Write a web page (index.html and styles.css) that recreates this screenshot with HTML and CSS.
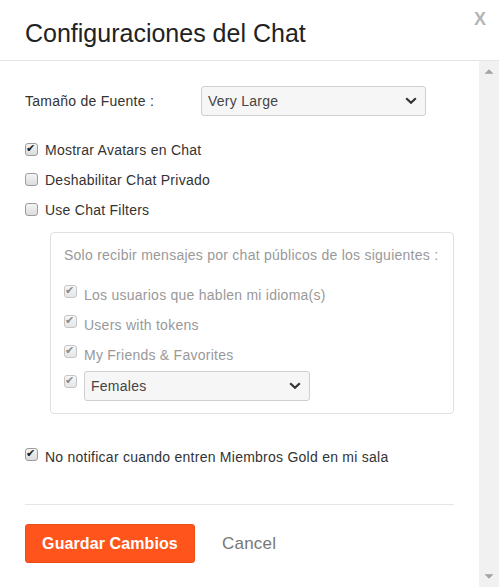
FILE: index.html
```html
<!DOCTYPE html>
<html lang="es">
<head>
<meta charset="utf-8">
<title>Configuraciones del Chat</title>
<link rel="stylesheet" href="styles.css">
</head>
<body>
<div class="modal">
  <header class="modal-header">
    <h1 class="title">Configuraciones del Chat</h1>
    <button class="close" type="button">X</button>
  </header>
  <div class="modal-body">
    <div class="content">
      <div class="font-row">
        <label class="font-label">Tamaño de Fuente :</label>
        <div class="select select-font">
          <select><option>Very Large</option></select>
          <svg class="chevron" width="12" height="8" viewBox="0 0 12 8"><polyline points="1.2,1.2 6,5.8 10.8,1.2" fill="none" stroke="#333" stroke-width="2.2"/></svg>
        </div>
      </div>
      <div class="options">
        <label class="check-row"><input type="checkbox" checked><span>Mostrar Avatars en Chat</span></label>
        <label class="check-row"><input type="checkbox"><span>Deshabilitar Chat Privado</span></label>
        <label class="check-row"><input type="checkbox"><span>Use Chat Filters</span></label>
      </div>
      <div class="filters">
        <p class="filters-note">Solo recibir mensajes por chat públicos de los siguientes :</p>
        <label class="check-row inner"><input type="checkbox" checked disabled><span>Los usuarios que hablen mi idioma(s)</span></label>
        <label class="check-row inner"><input type="checkbox" checked disabled><span>Users with tokens</span></label>
        <label class="check-row inner"><input type="checkbox" checked disabled><span>My Friends &amp; Favorites</span></label>
        <div class="check-row inner select-row">
          <input type="checkbox" checked disabled>
          <div class="select select-gender">
            <select><option>Females</option></select>
            <svg class="chevron" width="12" height="8" viewBox="0 0 12 8"><polyline points="1.2,1.2 6,5.8 10.8,1.2" fill="none" stroke="#333" stroke-width="2.2"/></svg>
          </div>
        </div>
      </div>
      <label class="check-row notify"><input type="checkbox" checked><span>No notificar cuando entren Miembros Gold en mi sala</span></label>
      <hr class="divider">
      <div class="actions">
        <button class="btn-save" type="button">Guardar Cambios</button>
        <a class="btn-cancel" href="#">Cancel</a>
      </div>
    </div>
    <div class="scrollbar">
      <svg width="10" height="5" viewBox="0 0 10 5"><polygon points="0.5,4.8 9.5,4.8 5,0.3" fill="#a3a3a3"/></svg>
      <svg width="10" height="5" viewBox="0 0 10 5"><polygon points="0.5,0.2 9.5,0.2 5,4.7" fill="#a3a3a3"/></svg>
    </div>
  </div>
</div>
</body>
</html>
```

FILE: styles.css
```css
html, body {
  margin: 0;
  padding: 0;
  background: #fff;
}

body {
  font-family: "Liberation Sans", Arial, sans-serif;
  font-size: 14px;
  color: #333;
}

.modal {
  width: 499px;
  height: 587px;
  display: flex;
  flex-direction: column;
  overflow: hidden;
  background: #fff;
}

.modal-header {
  position: relative;
  height: 41px;
  padding: 19px 0 0 25px;
  border-bottom: 1px solid #e5e5e5;
  flex: none;
}

.title {
  margin: 0;
  font-size: 25px;
  line-height: 28px;
  font-weight: normal;
  color: #222;
}

.close {
  position: absolute;
  top: 10px;
  right: 13px;
  padding: 0;
  border: 0;
  background: none;
  font-family: "Liberation Sans", Arial, sans-serif;
  font-size: 18px;
  font-weight: bold;
  line-height: 18px;
  color: #b5b5b5;
}

.modal-body {
  flex: 1;
  display: flex;
  min-height: 0;
}

.content {
  flex: 1;
  padding: 25px 25px 0 25px;
  overflow: hidden;
  letter-spacing: 0.25px;
}

.scrollbar {
  width: 20px;
  flex: none;
  background: #f1f1f1;
  display: flex;
  flex-direction: column;
  justify-content: space-between;
  align-items: center;
  padding: 8px 0 8px 0;
  box-sizing: border-box;
}

.scrollbar svg {
  display: block;
}

.font-row {
  display: flex;
  align-items: center;
  height: 30px;
}

.font-label {
  width: 176px;
  flex: none;
}

.select {
  position: relative;
  height: 30px;
}

.select select {
  appearance: none;
  -webkit-appearance: none;
  width: 100%;
  height: 30px;
  box-sizing: border-box;
  margin: 0;
  padding: 0 0 0 6px;
  border: 1px solid #cfcfcf;
  border-radius: 3px;
  background: #f6f6f6;
  font-family: "Liberation Sans", Arial, sans-serif;
  font-size: 14px;
  letter-spacing: 0.25px;
  color: #444;
}

.select .chevron {
  position: absolute;
  right: 9px;
  top: 11px;
  pointer-events: none;
}

.select-font {
  width: 225px;
}

.select-gender {
  width: 226px;
}

.options {
  margin-top: 19px;
}

.check-row {
  display: flex;
  align-items: flex-start;
  line-height: 30px;
  height: 30px;
}

.check-row input[type="checkbox"] {
  appearance: none;
  -webkit-appearance: none;
  flex: none;
  position: relative;
  width: 13px;
  height: 13px;
  margin: 8px 7px 0 0;
  box-sizing: border-box;
  border: 1px solid #9c9c9c;
  border-radius: 3px;
  background: linear-gradient(#f4f4f4, #dcdcdc);
}

.check-row input[type="checkbox"]:checked::after {
  content: "\2714";
  position: absolute;
  left: 0px;
  top: -1px;
  font-family: "DejaVu Sans", sans-serif;
  font-size: 11px;
  line-height: 12px;
  letter-spacing: 0;
  color: #1e1e1e;
}

.check-row input[type="checkbox"]:disabled {
  border-color: #c6c6c6;
  background: linear-gradient(#f6f6f6, #e6e6e6);
}

.check-row input[type="checkbox"]:disabled::after {
  color: #8c8c8c;
}

.filters {
  margin: 7px 0 0 25px;
  padding: 7px 0 12px 13px;
  border: 1px solid #e0e0e0;
  border-radius: 4px;
  color: #999;
}

.filters-note {
  margin: 0 0 10px 0;
  line-height: 30px;
}

.check-row.inner input[type="checkbox"] {
  margin-top: 5px;
}

.check-row.select-row {
  margin-top: 1px;
}

.check-row.select-row input[type="checkbox"] {
  margin-top: 4px;
}

.notify {
  margin-top: 28px;
}

.notify input[type="checkbox"] {
  margin-top: 6px;
}

.divider {
  margin: 32px 0 0 0;
  border: 0;
  border-top: 1px solid #e5e5e5;
  height: 0;
}

.actions {
  margin-top: 19px;
  display: flex;
  align-items: center;
}

.btn-save {
  width: 170px;
  height: 39px;
  padding: 0;
  border: 1px solid #ec4a16;
  border-radius: 3px;
  background: #ff541c;
  color: #fff;
  font-family: "Liberation Sans", Arial, sans-serif;
  font-size: 16px;
  font-weight: bold;
  letter-spacing: 0.1px;
}

.btn-cancel {
  margin-left: 27px;
  font-size: 17px;
  letter-spacing: 0.2px;
  color: #777;
  text-decoration: none;
}
```
